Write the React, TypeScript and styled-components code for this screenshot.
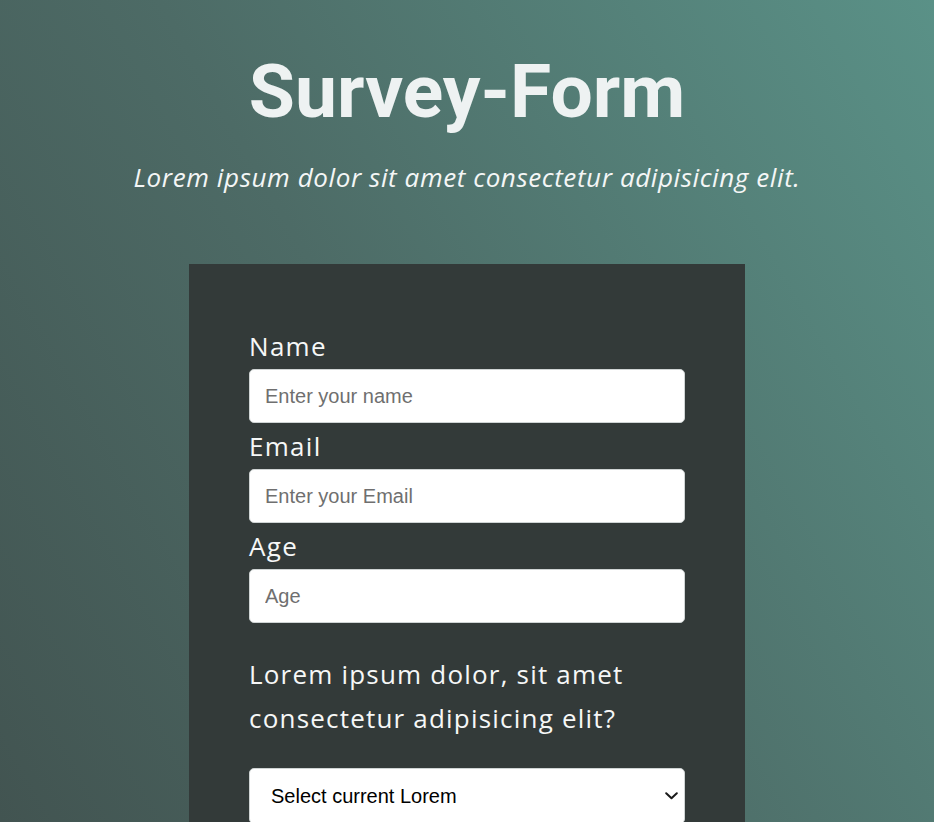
import React from "react";
import styled, { createGlobalStyle } from "styled-components";

const Global = createGlobalStyle`
  html, body { margin: 0; padding: 0; }
  body {
    min-height: 822px;
    background: linear-gradient(60deg, #425451 0%, #4d6b66 45%, #5a9187 100%);
    background-attachment: fixed;
    font-family: "Open Sans", "Noto Sans", sans-serif;
  }
`;

const Page = styled.main`
  display: flex;
  flex-direction: column;
  align-items: center;
  min-height: 822px;
`;

const Title = styled.h1`
  margin: 44px 0 0;
  font-family: Roboto, "Liberation Sans", sans-serif;
  font-weight: 700;
  font-size: 75px;
  line-height: 94px;
  color: #eef2f2;
  text-align: center;
`;

const Subtitle = styled.p`
  margin: 21px 0 0;
  font-style: italic;
  font-size: 26px;
  letter-spacing: 0.6px;
  line-height: 36px;
  color: #f4f6f6;
  text-align: center;
`;

const Card = styled.form`
  margin-top: 69px;
  width: 556px;
  box-sizing: border-box;
  padding: 59px 60px 40px;
  background: #333a39;
`;

const Label = styled.label`
  display: block;
  font-size: 26px;
  letter-spacing: 1.3px;
  line-height: 46px;
  color: #f6f7f7;
`;

const Input = styled.input`
  display: block;
  box-sizing: border-box;
  width: 100%;
  height: 54px;
  padding: 0 15px;
  border: 1px solid #cfd4d4;
  border-radius: 5px;
  background: #fff;
  font-family: "Liberation Sans", Arial, sans-serif;
  font-size: 20px;
  color: #222;
  &::placeholder { color: #6f6f6f; }
  &:focus { outline: none; }
`;

const Question = styled.p`
  margin: 29px 0 28px;
  font-size: 26px;
  letter-spacing: 1.2px;
  line-height: 44px;
  color: #f6f7f7;
`;

const SelectWrap = styled.div`
  position: relative;
`;

const Select = styled.select`
  display: block;
  box-sizing: border-box;
  width: 100%;
  height: 56px;
  padding: 0 30px 0 21px;
  border: 1px solid #cfd4d4;
  border-radius: 5px;
  background: #fff;
  appearance: none;
  -webkit-appearance: none;
  font-family: "Liberation Sans", Arial, sans-serif;
  font-size: 20px;
  color: #000;
  &:focus { outline: none; }
`;

const Chevron = styled.svg`
  position: absolute;
  right: 7px;
  top: 24px;
  width: 13px;
  height: 8px;
  pointer-events: none;
`;

export default function App() {
  return (
    <>
      <Global />
      <Page>
        <Title>Survey-Form</Title>
        <Subtitle>Lorem ipsum dolor sit amet consectetur adipisicing elit.</Subtitle>
        <Card onSubmit={(e) => e.preventDefault()}>
          <Label htmlFor="name">Name</Label>
          <Input id="name" type="text" placeholder="Enter your name" />
          <Label htmlFor="email">Email</Label>
          <Input id="email" type="email" placeholder="Enter your Email" />
          <Label htmlFor="age">Age</Label>
          <Input id="age" type="number" placeholder="Age" />
          <Question>Lorem ipsum dolor, sit amet consectetur adipisicing elit?</Question>
          <SelectWrap>
            <Select defaultValue="">
              <option value="" disabled>Select current Lorem</option>
              <option>Lorem</option>
              <option>Ipsum</option>
            </Select>
            <Chevron viewBox="0 0 13 8" aria-hidden="true">
              <path d="M1.2 1.2 L6.5 6.3 L11.8 1.2" fill="none" stroke="#1a1a1a" strokeWidth="2" strokeLinecap="round" strokeLinejoin="round" />
            </Chevron>
          </SelectWrap>
        </Card>
      </Page>
    </>
  );
}
